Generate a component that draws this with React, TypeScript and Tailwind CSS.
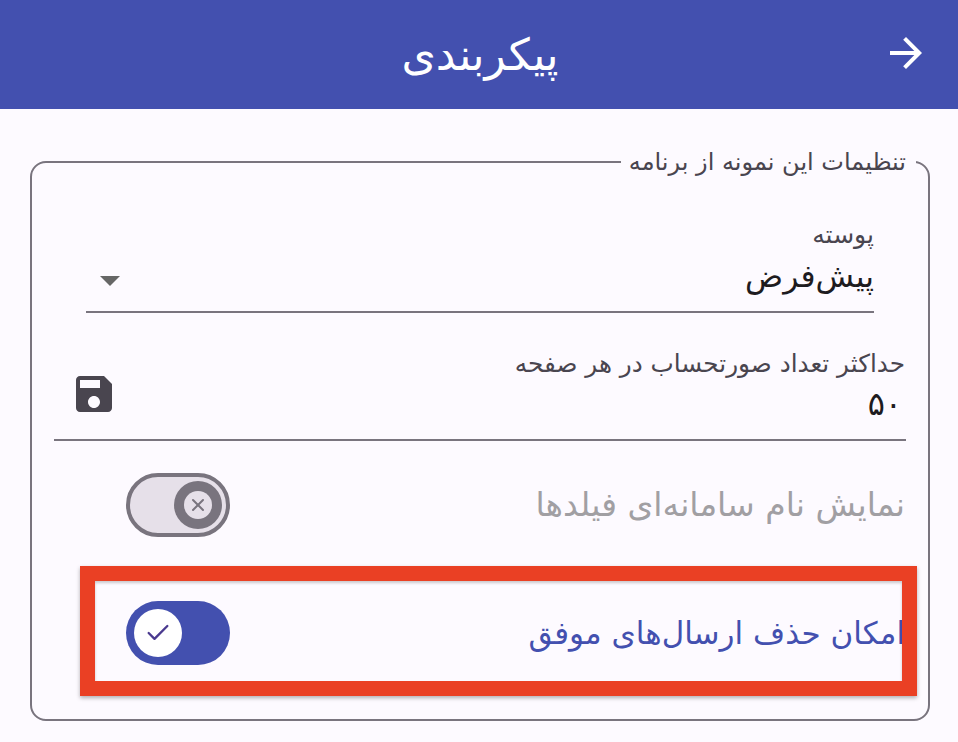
import { Check, X } from 'lucide-react';

const FONT = "font-['DejaVu_Sans','Noto_Sans',sans-serif]";

function ArrowIcon() {
  return (
    <svg viewBox="0 0 24 24" className="w-12 h-12 fill-white">
      <path d="M12 4l-1.41 1.41L16.17 11H4v2h12.17l-5.58 5.59L12 20l8-8z" />
    </svg>
  );
}

function SaveIcon() {
  return (
    <svg viewBox="0 0 24 24" className="w-12 h-12 fill-[#49454f]">
      <path d="M17 3H5c-1.11 0-2 .9-2 2v14c0 1.1.89 2 2 2h14c1.1 0 2-.9 2-2V7l-4-4zm-5 16c-1.66 0-3-1.34-3-3s1.34-3 3-3 3 1.34 3 3-1.34 3-3 3zm3-10H5V5h10v4z" />
    </svg>
  );
}

function SwitchOff() {
  return (
    <div className="w-[104px] h-16 rounded-full border-4 border-[#79747e] bg-[#e6e0e9] flex items-center justify-start pr-1">
      <div className="w-12 h-12 rounded-full bg-[#79747e] flex items-center justify-center">
        <div className="w-7 h-7 rounded-full bg-[#e6e0e9] flex items-center justify-center">
          <X className="w-5 h-5 text-[#79747e]" strokeWidth={2.4} />
        </div>
      </div>
    </div>
  );
}

function SwitchOn() {
  return (
    <div className="w-[104px] h-16 rounded-full bg-[#4350af] flex items-center justify-end pl-2">
      <div className="w-12 h-12 rounded-full bg-white flex items-center justify-center">
        <Check className="w-7 h-7 text-[#4a3a8f]" strokeWidth={2} />
      </div>
    </div>
  );
}

export default function App() {
  return (
    <div dir="rtl" className={`relative w-[958px] h-[742px] overflow-hidden bg-[#fdfaff] ${FONT}`}>
      <header className="h-[109px] bg-[#4350af] flex items-center pr-[28px] pb-[3px]">
        <ArrowIcon />
        <h1 className="flex-1 text-center text-white text-[44px] leading-none pl-[78px] pt-[3px]">پیکربندی</h1>
      </header>

      <fieldset className="mr-[28px] ml-[30px] mt-[44px] h-[568px] border-2 border-[#79747e] rounded-2xl pr-[22px] pl-[22px] pb-0">
        <legend className="pr-2.5 pl-2 -mr-[10px] text-[24px] leading-[18px] text-[#49454f]">تنظیمات این نمونه از برنامه</legend>

        <div className="pt-[52px] mr-[32px] ml-[32px]">
          <label className="block text-[25px] leading-6 text-[#49454f]">پوسته</label>
          <div className="h-[66px] border-b-2 border-[#79747e] flex items-center justify-between pb-[4px]">
            <span className="text-[31.5px] text-[#1d1b20]">پیش‌فرض</span>
            <span className="ml-[14px] mt-[8px] w-0 h-0 border-x-[10px] border-x-transparent border-t-[10px] border-t-[#666]" />
          </div>
        </div>

        <div className="mt-[39px]">
          <label className="block pr-[1px] text-[24.7px] leading-6 text-[#49454f]">حداکثر تعداد صورتحساب در هر صفحه</label>
          <div className="h-[65px] border-b-2 border-[#79747e] flex items-center justify-between pr-[4px] pb-[8px]">
            <span className="text-[32px] text-[#1d1b20]">۵۰</span>
            <span className="ml-[16px] -mt-[20px]"><SaveIcon /></span>
          </div>
        </div>

        <div className="mt-[32px] h-[64px] flex items-center justify-between pl-[72px]">
          <span className="pr-[1px] text-[33px] text-[#a19fa3]">نمایش نام سامانه‌ای فیلدها</span>
          <SwitchOff />
        </div>

        <div className="mt-[64px] h-[64px] flex items-center justify-between pl-[72px]">
          <span className="pr-[1px] text-[31px] text-[#4350af]">امکان حذف ارسال‌های موفق</span>
          <SwitchOn />
        </div>
      </fieldset>

      <div className="absolute left-[80px] top-[566px] w-[837px] h-[130px] border-[15px] border-[#ea4024] shadow-[0_2px_4px_rgba(0,0,0,0.3),inset_0_2px_3px_rgba(0,0,0,0.2)]" />
    </div>
  );
}
